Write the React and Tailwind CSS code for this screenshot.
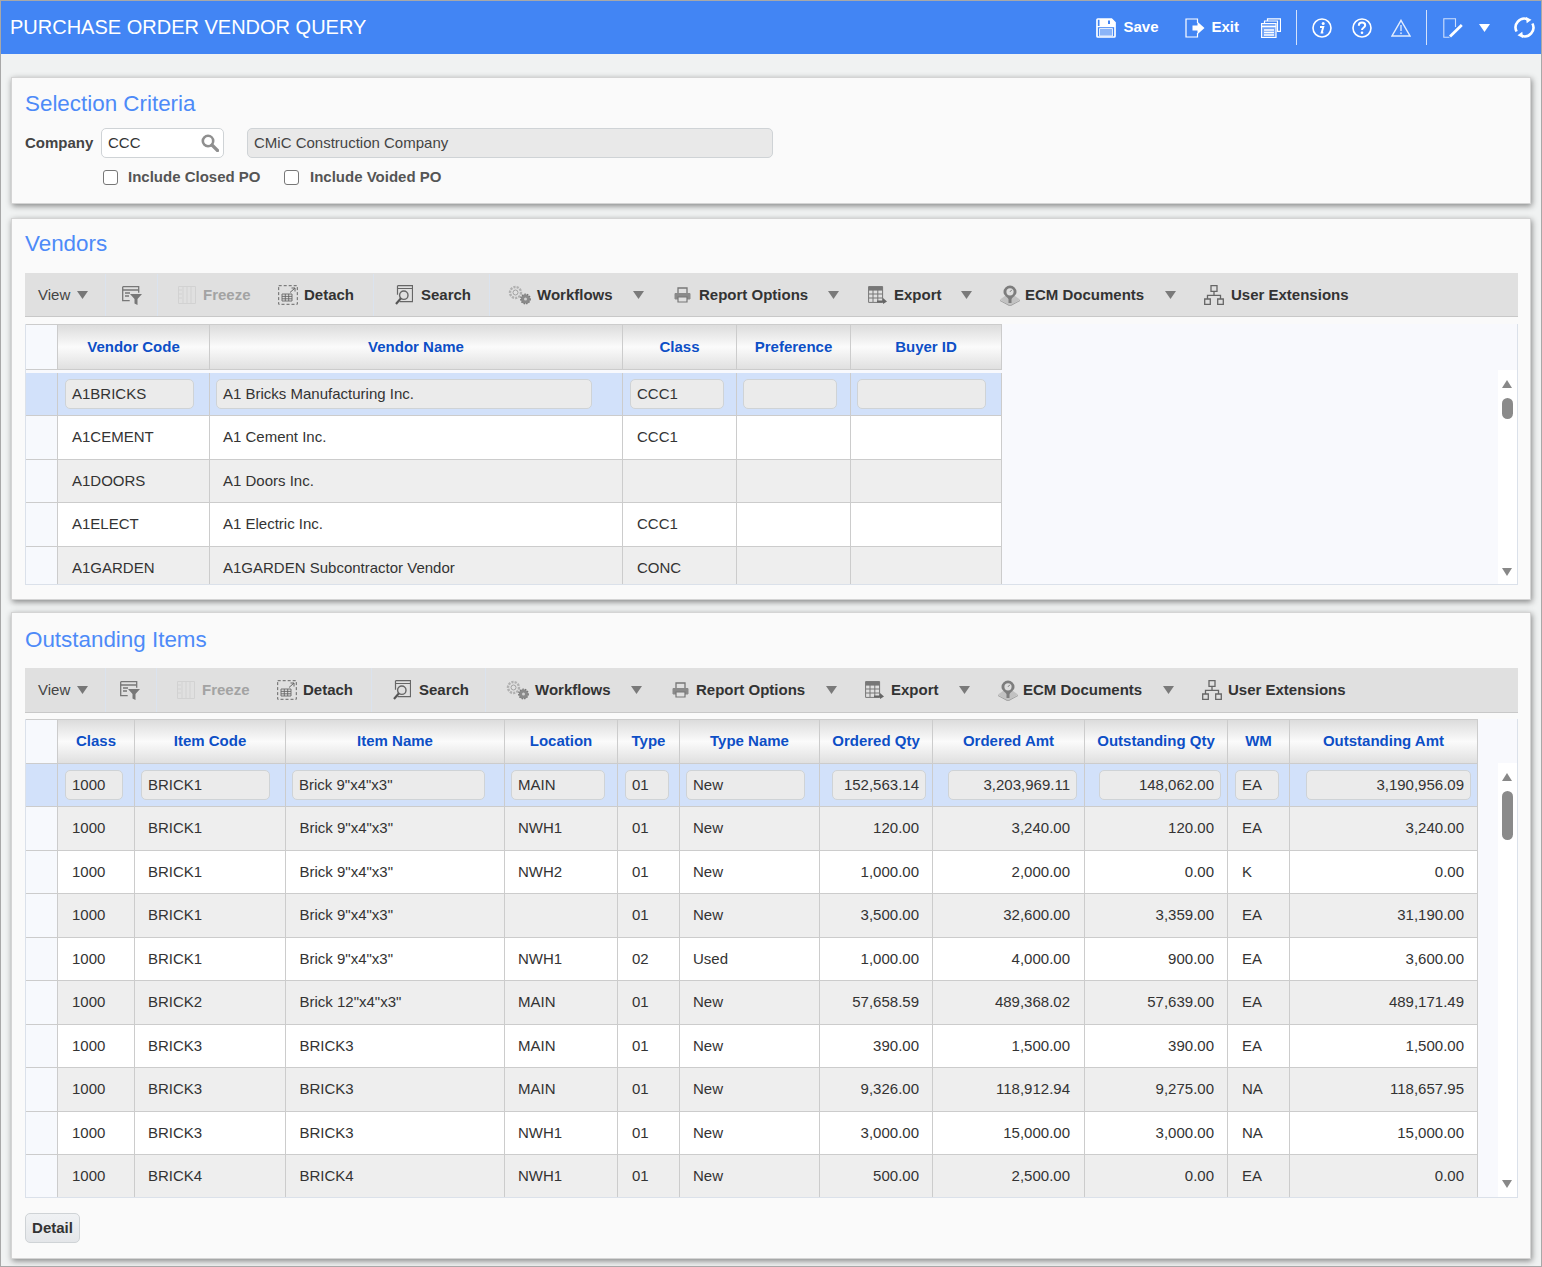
import React from "react";

// 회사 / 벤더 / 미결 항목 데이터
const VENDOR_COLS = [
  { label: "Vendor Code", key: "code", w: "w-[152px]", input: "ml-[7px] w-[129px]", text: "pl-[14px]" },
  { label: "Vendor Name", key: "name", w: "w-[413px]", input: "ml-[6px] w-[376px]", text: "pl-[13px]" },
  { label: "Class", key: "cls", w: "w-[114px]", input: "ml-[7px] w-[94px]", text: "pl-[14px]" },
  { label: "Preference", key: "pref", w: "w-[114px]", input: "ml-[6px] w-[94px]", text: "pl-[13px]" },
  { label: "Buyer ID", key: "buyer", w: "w-[151px]", input: "ml-[6px] w-[129px]", text: "pl-[13px]" },
];

const VENDORS = [
  { code: "A1BRICKS", name: "A1 Bricks Manufacturing Inc.", cls: "CCC1", pref: "", buyer: "" },
  { code: "A1CEMENT", name: "A1 Cement Inc.", cls: "CCC1", pref: "", buyer: "" },
  { code: "A1DOORS", name: "A1 Doors Inc.", cls: "", pref: "", buyer: "" },
  { code: "A1ELECT", name: "A1 Electric Inc.", cls: "CCC1", pref: "", buyer: "" },
  { code: "A1GARDEN", name: "A1GARDEN Subcontractor Vendor", cls: "CONC", pref: "", buyer: "" },
];

const ITEM_COLS = [
  { label: "Class", w: "w-[77px]", input: "ml-[7px] w-[58px]", text: "pl-[14px]" },
  { label: "Item Code", w: "w-[151px]", input: "ml-[6px] w-[129px]", text: "pl-[13px]" },
  { label: "Item Name", w: "w-[219px]", input: "ml-[6px] w-[193px]", text: "pl-[13.5px]" },
  { label: "Location", w: "w-[113px]", input: "ml-[6px] w-[94px]", text: "pl-[13px]" },
  { label: "Type", w: "w-[62px]", input: "ml-[7px] w-[44px]", text: "pl-[14px]" },
  { label: "Type Name", w: "w-[140px]", input: "ml-[6px] w-[119px]", text: "pl-[13px]" },
  { label: "Ordered Qty", w: "w-[113px]", input: "ml-[12px] w-[94px]", text: "pr-[13px] justify-end", right: true },
  { label: "Ordered Amt", w: "w-[152px]", input: "ml-[15px] w-[129px]", text: "pr-[14px] justify-end", right: true },
  { label: "Outstanding Qty", w: "w-[143px]", input: "ml-[14px] w-[122px]", text: "pr-[13px] justify-end", right: true },
  { label: "WM", w: "w-[62px]", input: "ml-[7px] w-[44px]", text: "pl-[14px]" },
  { label: "Outstanding Amt", w: "w-[188px]", input: "ml-[16px] w-[165px]", text: "pr-[13px] justify-end", right: true },
];

const ITEMS = [
  ["1000", "BRICK1", 'Brick 9"x4"x3"', "MAIN", "01", "New", "152,563.14", "3,203,969.11", "148,062.00", "EA", "3,190,956.09"],
  ["1000", "BRICK1", 'Brick 9"x4"x3"', "NWH1", "01", "New", "120.00", "3,240.00", "120.00", "EA", "3,240.00"],
  ["1000", "BRICK1", 'Brick 9"x4"x3"', "NWH2", "01", "New", "1,000.00", "2,000.00", "0.00", "K", "0.00"],
  ["1000", "BRICK1", 'Brick 9"x4"x3"', "", "01", "New", "3,500.00", "32,600.00", "3,359.00", "EA", "31,190.00"],
  ["1000", "BRICK1", 'Brick 9"x4"x3"', "NWH1", "02", "Used", "1,000.00", "4,000.00", "900.00", "EA", "3,600.00"],
  ["1000", "BRICK2", 'Brick 12"x4"x3"', "MAIN", "01", "New", "57,658.59", "489,368.02", "57,639.00", "EA", "489,171.49"],
  ["1000", "BRICK3", "BRICK3", "MAIN", "01", "New", "390.00", "1,500.00", "390.00", "EA", "1,500.00"],
  ["1000", "BRICK3", "BRICK3", "MAIN", "01", "New", "9,326.00", "118,912.94", "9,275.00", "NA", "118,657.95"],
  ["1000", "BRICK3", "BRICK3", "NWH1", "01", "New", "3,000.00", "15,000.00", "3,000.00", "NA", "15,000.00"],
  ["1000", "BRICK4", "BRICK4", "NWH1", "01", "New", "500.00", "2,500.00", "0.00", "EA", "0.00"],
];

function Caret({ className = "" }) {
  return (
    <svg width="11" height="8" viewBox="0 0 11 8" className={"shrink-0 " + className}>
      <path d="M0 0h11L5.5 8z" fill="currentColor" />
    </svg>
  );
}

// 상단 헤더 아이콘
function SaveIcon() {
  return (
    <svg width="20" height="20" viewBox="0 0 20 20" fill="none">
      <path d="M3.5 1h12L19 4.5V9H3.5z" fill="#fff" />
      <path d="M12 2.5h2V6h-2z" fill="#4285f4" />
      <path d="M1 1.8a.8.8 0 0 1 .8-.8h13.7L19 4.5v13.7a.8.8 0 0 1-.8.8H1.8a.8.8 0 0 1-.8-.8z" stroke="#fff" strokeWidth="1.7" />
      <path d="M1 8.6h18" stroke="#fff" strokeWidth="1.2" />
      <path d="M3.5 10.5h13V18h-13z" fill="#8ab4f8" stroke="#fff" strokeWidth=".8" />
    </svg>
  );
}

function ExitIcon() {
  return (
    <svg width="20" height="20" viewBox="0 0 20 20" fill="none">
      <path d="M12.5 5V1H1v18h11.5v-4" stroke="#fff" strokeWidth="1.2" />
      <path d="M7.5 7.5h5V3.8l7 6.2-7 6.2v-3.7h-5z" fill="#fff" />
    </svg>
  );
}

function PagesIcon() {
  return (
    <svg width="20" height="20" viewBox="0 0 20 20" fill="none" stroke="#fff">
      <path d="M6.5 3V.8h13v12.5H16" strokeWidth="1.2" />
      <path d="M3.5 5V3h13v11" strokeWidth="1.2" />
      <path d="M.5 5.5h14.5v14H.5z" fill="#fff" fillOpacity=".25" strokeWidth="1.2" />
      <path d="M.8 8.5h14M3 12h10M3 14.5h10M3 17h10" strokeWidth="1.3" />
    </svg>
  );
}

function InfoIcon() {
  return (
    <svg width="20" height="20" viewBox="0 0 20 20" fill="none">
      <circle cx="10" cy="10" r="9" stroke="#fff" strokeWidth="1.6" />
      <circle cx="11.2" cy="5.4" r="1.5" fill="#fff" />
      <path d="M8 9h3.3l-1.6 5.6h1.6" stroke="#fff" strokeWidth="1.9" />
    </svg>
  );
}

function HelpIcon() {
  return (
    <svg width="20" height="20" viewBox="0 0 20 20" fill="none">
      <circle cx="10" cy="10" r="9" stroke="#fff" strokeWidth="1.6" />
      <path d="M6.8 7.7c0-2 1.4-3.1 3.2-3.1s3.2 1 3.2 2.7c0 2.4-3.2 2.4-3.2 4.6" stroke="#fff" strokeWidth="2" />
      <circle cx="10" cy="14.7" r="1.3" fill="#fff" />
    </svg>
  );
}

function WarnIcon() {
  return (
    <svg width="20" height="18" viewBox="0 0 20 18" fill="none">
      <path d="M10 1.3 19 17H1z" stroke="#fff" strokeOpacity=".85" strokeWidth="1.4" />
      <path d="M10 6v6" stroke="#fff" strokeOpacity=".7" strokeWidth="1.6" />
      <circle cx="10" cy="14.3" r="1" fill="#fff" fillOpacity=".7" />
    </svg>
  );
}

function EditIcon() {
  return (
    <svg width="20" height="20" viewBox="0 0 20 20" fill="none">
      <path d="M12.5 9V.8H.8v18.4h5.7" stroke="#fff" strokeOpacity=".75" strokeWidth="1.1" />
      <path d="M7 18.5 18.8 7" stroke="#fff" strokeWidth="2.8" />
    </svg>
  );
}

function RefreshIcon() {
  return (
    <svg width="21" height="21" viewBox="0 0 21 21" fill="none">
      <path d="M2.6 14.5A8.8 8.8 0 0 1 13.5 2.2" stroke="#fff" strokeWidth="2.6" />
      <path d="M18.4 6.5A8.8 8.8 0 0 1 7.5 18.8" stroke="#fff" strokeWidth="2.6" />
      <path d="M12 0l5.5 2.8-4.8 3.4zM9 21l-5.5-2.8 4.8-3.4z" fill="#fff" />
    </svg>
  );
}

// 툴바 아이콘
function FilterIcon() {
  return (
    <svg width="20" height="19" viewBox="0 0 20 19" fill="none">
      <path d="M.7.7h16v6M.7.7v14h7" stroke="#777" strokeWidth="1.3" />
      <path d="M.7 4h16M3 7h5M3 10h4" stroke="#777" strokeWidth="1.3" />
      <path d="M8 8h12l-4.5 5v6l-3-1.5V13z" fill="#777" />
    </svg>
  );
}

function FreezeIcon() {
  return (
    <svg width="18" height="18" viewBox="0 0 18 18" fill="none" stroke="#d2d2d2">
      <path d="M.5.5h17v17H.5zM5 1v16M9 1v16M13 1v16M1 4h3M1 8h3M1 12h3" />
    </svg>
  );
}

function DetachIcon() {
  return (
    <svg width="20" height="20" viewBox="0 0 20 20" fill="none">
      <path d="M.7.7h18.6v18.6H.7z" stroke="#666" strokeDasharray="3 2" />
      <path d="M4 9h10v7H4zM4 11.4h10M4 13.8h10M7.3 9v7M10.7 9v7" stroke="#666" strokeWidth=".9" />
      <path d="M12 7.5 17 3M13.5 3H17v3.5" stroke="#666" />
    </svg>
  );
}

function SearchDocIcon() {
  return (
    <svg width="18" height="20" viewBox="0 0 18 20" fill="none">
      <path d="M2.5.7h15v16h-13" stroke="#666" strokeWidth="1.2" />
      <path d="M2.5.7v9M2.5 3.5h15" stroke="#666" strokeWidth="1.2" />
      <circle cx="8.8" cy="10.2" r="4.2" stroke="#666" strokeWidth="1.4" />
      <path d="M5.8 13.4 1 19" stroke="#555" strokeWidth="2.2" />
    </svg>
  );
}

function GearsIcon() {
  return (
    <svg width="24" height="20" viewBox="0 0 24 20" fill="none">
      <circle cx="7.5" cy="7.5" r="5.5" stroke="#b0b0b0" strokeWidth="2.4" strokeDasharray="2.2 1.1" />
      <circle cx="7.5" cy="7.5" r="2.5" stroke="#a0a0a0" />
      <circle cx="17.5" cy="14" r="4.6" fill="#8a8a8a" />
      <circle cx="17.5" cy="14" r="4.8" stroke="#777" strokeWidth="1.2" strokeDasharray="1.6 1" />
      <circle cx="17.5" cy="14" r="1.5" fill="#d0d0d0" />
    </svg>
  );
}

function PrinterIcon() {
  return (
    <svg width="17" height="16" viewBox="0 0 17 16" fill="none">
      <path d="M4 6V1h9v5" stroke="#777" strokeWidth="1.3" />
      <path d="M1 6.5h15V12h-15z" fill="#8a8a8a" stroke="#8a8a8a" strokeLinejoin="round" />
      <path d="M4 10h9v5H4z" fill="#e0e0e0" stroke="#777" strokeWidth="1.2" />
    </svg>
  );
}

function ExportIcon() {
  return (
    <svg width="19" height="18" viewBox="0 0 19 18" fill="none">
      <path d="M.6.6h14v15.8H.6z" stroke="#777" />
      <path d="M.6.6h14v4H.6z" fill="#777" />
      <path d="M.6 8h14M.6 12h14M5 4v12M9.8 4v12" stroke="#777" />
      <path d="M9 14.5h6V12l4 3.5-4 2.5v-1.5H9z" fill="#666" />
    </svg>
  );
}

function EcmIcon() {
  return (
    <svg width="20" height="21" viewBox="0 0 20 21" fill="none">
      <path d="M0 14.5 5 11h10l5 3.5-10 6.5z" fill="#c2c2c2" />
      <path d="M0 15.5 10 21l10-5.5" stroke="#a0a0a0" />
      <path d="M10 .5a6.5 6.5 0 0 1 6.5 6.5c0 3.3-3.7 4.7-5 7.2V18h-3v-3.8c-1.3-2.5-5-3.9-5-7.2A6.5 6.5 0 0 1 10 .5z" fill="#7d7d7d" />
      <circle cx="10" cy="6.8" r="3.6" fill="#dedede" />
      <path d="M10 6.8 11.8 4.8" stroke="#777" />
    </svg>
  );
}

function TreeIcon() {
  return (
    <svg width="20" height="20" viewBox="0 0 20 20" fill="none" stroke="#666" strokeWidth="1.3">
      <path d="M7 .7h6v5.6H7zM.7 14h5.6v5.3H.7zM13.7 14h5.6v5.3h-5.6z" />
      <path d="M10 6.3v4M3.5 14v-3.7h13V14" />
    </svg>
  );
}

function MagnifierIcon() {
  return (
    <svg width="18" height="18" viewBox="0 0 18 18" fill="none">
      <circle cx="7" cy="7" r="5.2" stroke="#8f8f8f" strokeWidth="2.6" />
      <path d="M11 11l5.5 5.5" stroke="#8f8f8f" strokeWidth="3.2" strokeLinecap="round" />
    </svg>
  );
}

function ToolItem({ icon, label, disabled, caret, className = "", gap = "ml-[7px]" }) {
  return (
    <div className={"flex items-center shrink-0 " + className}>
      {icon}
      <span className={"font-bold " + gap + (disabled ? " text-[#a3a3a3]" : " text-[#333]")}>{label}</span>
      {caret}
    </div>
  );
}

function Toolbar({ second }) {
  return (
    <div className={"flex items-center bg-[#e0e0e0] border-b border-[#c8c8c8] " + (second ? "h-[45px]" : "h-[44px] pt-[1px]")}>
      <div className="w-[81px] h-full flex items-center pl-[13px] border-r border-[#dbe3ee] text-[#444]">
        <span>View</span>
        <Caret className="ml-[7px] text-[#777]" />
      </div>
      <div className={"h-full flex items-center border-r border-[#dbe3ee] " + (second ? "w-[51px] pl-[14px]" : "w-[52px] pl-[16px]")}>
        <FilterIcon />
      </div>
      <div className={"h-full flex items-center border-r border-[#dbe3ee] pl-[20px] " + (second ? "w-[215px]" : "w-[216px]")}>
        <ToolItem icon={<FreezeIcon />} label="Freeze" disabled className="w-[100px]" />
        <ToolItem icon={<DetachIcon />} label="Detach" gap="ml-[6px]" />
      </div>
      <div className={"h-full flex items-center border-r border-[#dbe3ee] pl-[21px] " + (second ? "w-[114px]" : "w-[116px]")}>
        <ToolItem icon={<SearchDocIcon />} label="Search" gap="ml-[8px]" />
      </div>
      <ToolItem icon={<GearsIcon />} label="Workflows" gap="ml-[5px]" className={"w-[166px] " + (second ? "ml-[20px]" : "ml-[18px]")} caret={<Caret className="ml-[20px] text-[#7a7a7a]" />} />
      <ToolItem
        icon={<PrinterIcon />}
        label="Report Options"
        gap={second ? "ml-[7px]" : "ml-[8px]"}
        className={second ? "w-[193px]" : "w-[194px]"}
        caret={<Caret className={(second ? "ml-[21px]" : "ml-[20px]") + " text-[#7a7a7a]"} />}
      />
      <ToolItem
        icon={<ExportIcon />}
        label="Export"
        className={second ? "w-[133px]" : "w-[132px]"}
        caret={<Caret className={(second ? "ml-[20px]" : "ml-[19px]") + " text-[#7a7a7a]"} />}
      />
      <ToolItem icon={<EcmIcon />} label="ECM Documents" gap="ml-[5px]" className="w-[204px]" caret={<Caret className="ml-[21px] text-[#7a7a7a]" />} />
      <ToolItem icon={<TreeIcon />} label="User Extensions" gap={second ? "ml-[6px]" : "ml-[7px]"} />
    </div>
  );
}

function ReadOnlyBox({ value, cls, right }) {
  return (
    <div className={"h-[30px] px-[6px] flex items-center rounded-[5px] border border-[#cfd3d6] bg-[#ebebeb] text-[#333] " + cls + (right ? " justify-end" : "")}>
      {value}
    </div>
  );
}

function ScrollRail({ up, thumb, down }) {
  return (
    <div className="w-[19px] flex-1 relative bg-white">
      <div className={"absolute left-[4px] w-0 h-0 border-l-[5.5px] border-r-[5.5px] border-b-[8px] border-l-transparent border-r-transparent border-b-[#888] " + up} />
      <div className={"absolute left-[4px] w-[11px] rounded-full bg-[#8a8a8a] " + thumb} />
      <div className={"absolute left-[4px] w-0 h-0 border-l-[5.5px] border-r-[5.5px] border-t-[8px] border-l-transparent border-r-transparent border-t-[#888] " + down} />
    </div>
  );
}

function Marker({ selected }) {
  return <div className={"w-[32px] shrink-0 border-r border-[#ccc] " + (selected ? "bg-[#d2e1fa]" : "bg-[#f7f9fd]")} />;
}

function Card({ title, className = "", titleClass = "pt-[12px]", children }) {
  return (
    <section className={"mx-[10px] pl-[13px] pr-[12px] shrink-0 bg-[#fafafa] border border-[#d4d4d4] shadow-[1px_2px_6px_rgba(0,0,0,0.45)] " + className}>
      <h2 className={"text-[22.4px] leading-[28px] text-[#4d8af8] " + titleClass}>{title}</h2>
      {children}
    </section>
  );
}

export default function App() {
  return (
    <div
      className="w-[1542px] h-[1267px] overflow-hidden flex flex-col bg-[#f0f2f2] border border-[#a8a8a8] text-[15px] text-[#333]"
      style={{ fontFamily: '"Liberation Sans", Arial, sans-serif' }}
    >
      {/* 상단 타이틀 바 */}
      <header className="h-[53px] shrink-0 flex items-center bg-[#4285f4] text-white pl-[9px]">
        <h1 className="text-[20px] mb-[2px]">PURCHASE ORDER VENDOR QUERY</h1>
        <div className="ml-auto flex items-center font-bold">
          <SaveIcon />
          <span className="ml-[7px]">Save</span>
          <span className="ml-[27px]"><ExitIcon /></span>
          <span className="ml-[6px]">Exit</span>
          <span className="ml-[22px]"><PagesIcon /></span>
          <div className="ml-[15px] w-px h-[35px] bg-[#d4e2fb]" />
          <span className="ml-[15px]"><InfoIcon /></span>
          <span className="ml-[20px]"><HelpIcon /></span>
          <span className="ml-[19px]"><WarnIcon /></span>
          <div className="ml-[15px] w-px h-[35px] bg-[#d4e2fb]" />
          <span className="ml-[16px]"><EditIcon /></span>
          <Caret className="ml-[16px] text-white" />
          <span className="ml-[24px] mr-[6px]"><RefreshIcon /></span>
        </div>
      </header>

      {/* Selection Criteria */}
      <Card title="Selection Criteria" className="mt-[23px] h-[127px]">
        <div className="flex items-center mt-[10px] h-[30px]">
          <label className="font-bold text-[#444] w-[76px]">Company</label>
          <div className="w-[123px] h-[30px] pl-[6px] pr-[4px] flex items-center justify-between rounded-[5px] border border-[#cfd3d6] bg-white">
            <span>CCC</span>
            <MagnifierIcon />
          </div>
          <div className="ml-[23px] w-[526px] h-[30px] px-[6px] flex items-center rounded-[5px] border border-[#cfd3d6] bg-[#e9e9e9] text-[#444]">
            CMiC Construction Company
          </div>
        </div>
        <div className="flex items-center mt-[4px] ml-[78px] h-[30px] font-bold text-[#555]">
          <input type="checkbox" className="w-[15px] h-[15px] appearance-none rounded-[3px] border border-[#777] bg-white" />
          <span className="ml-[10px] w-[156px]">Include Closed PO</span>
          <input type="checkbox" className="w-[15px] h-[15px] appearance-none rounded-[3px] border border-[#777] bg-white" />
          <span className="ml-[11px]">Include Voided PO</span>
        </div>
      </Card>

      {/* Vendors */}
      <Card title="Vendors" titleClass="pt-[11px]" className="mt-[14px] h-[382px]">
        <div className="mt-[15px]">
          <Toolbar />
        </div>
        <div className="mt-[7px] flex h-[261px] bg-[#f8f9fd] border-l border-r border-[#dbe1ea] border-b">
          <div className="w-[976px] shrink-0 flex flex-col overflow-hidden">
            <div className="flex h-[46px] shrink-0 bg-gradient-to-b from-[#dcdcdc] via-[#fbfbfb] to-[#e0e0e0] border-t border-b border-[#ccc]">
              <Marker />
              {VENDOR_COLS.map((col) => (
                <div key={col.label} className={"flex items-center justify-center font-bold text-[#0d4fc6] border-r border-[#ccc] " + col.w}>
                  {col.label}
                </div>
              ))}
            </div>
            <div className="h-[2.5px] shrink-0" />
            {VENDORS.map((row, i) => (
              <div key={row.code} className={"flex h-[43.5px] shrink-0 border-b border-[#ccc] " + (i === 0 ? "bg-[#d2e1fa]" : i % 2 ? "bg-white" : "bg-[#eeeeee]")}>
                <Marker selected={i === 0} />
                {VENDOR_COLS.map((col) => (
                  <div key={col.label} className={"flex items-center shrink-0 border-r border-[#ccc] " + col.w + (i === 0 ? "" : " " + col.text)}>
                    {i === 0 ? <ReadOnlyBox value={row[col.key]} cls={col.input} /> : row[col.key]}
                  </div>
                ))}
              </div>
            ))}
          </div>
          <div className="flex-1" />
          <div className="flex flex-col">
            <div className="h-[46px]" />
            <ScrollRail up="top-[10px]" thumb="top-[28px] h-[21px]" down="top-[198px]" />
          </div>
        </div>
      </Card>

      {/* Outstanding Items */}
      <Card title="Outstanding Items" titleClass="pt-[13px]" className="mt-[12px] h-[647px]">
        <div className="mt-[14px]">
          <Toolbar second />
        </div>
        <div className="mt-[6px] flex h-[479px] bg-[#f8f9fd] border-l border-r border-[#dbe1ea] border-b">
          <div className="w-[1452px] shrink-0 flex flex-col overflow-hidden">
            <div className="flex h-[44.5px] shrink-0 bg-gradient-to-b from-[#dcdcdc] via-[#fbfbfb] to-[#e0e0e0] border-t border-b border-[#ccc]">
              <Marker />
              {ITEM_COLS.map((col) => (
                <div key={col.label} className={"flex items-center justify-center font-bold text-[#0d4fc6] border-r border-[#ccc] " + col.w}>
                  {col.label}
                </div>
              ))}
            </div>
            {ITEMS.map((row, i) => (
              <div key={i} className={"flex h-[43.5px] shrink-0 border-b border-[#ccc] " + (i === 0 ? "bg-[#d2e1fa]" : i % 2 ? "bg-[#eeeeee]" : "bg-white")}>
                <Marker selected={i === 0} />
                {ITEM_COLS.map((col, c) => (
                  <div key={col.label} className={"flex items-center shrink-0 border-r border-[#ccc] " + col.w + (i === 0 ? "" : " " + col.text)}>
                    {i === 0 ? <ReadOnlyBox value={row[c]} cls={col.input} right={col.right} /> : row[c]}
                  </div>
                ))}
              </div>
            ))}
          </div>
          <div className="flex-1" />
          <div className="flex flex-col">
            <div className="h-[44px]" />
            <ScrollRail up="top-[10px]" thumb="top-[28px] h-[49px]" down="top-[417px]" />
          </div>
        </div>
        <button type="button" className="mt-[15px] h-[30px] w-[55px] rounded-[5px] border border-[#cfd3d6] bg-gradient-to-b from-[#f0f2f4] to-[#e4e6e9] font-bold text-[#333]">
          Detail
        </button>
      </Card>
    </div>
  );
}
